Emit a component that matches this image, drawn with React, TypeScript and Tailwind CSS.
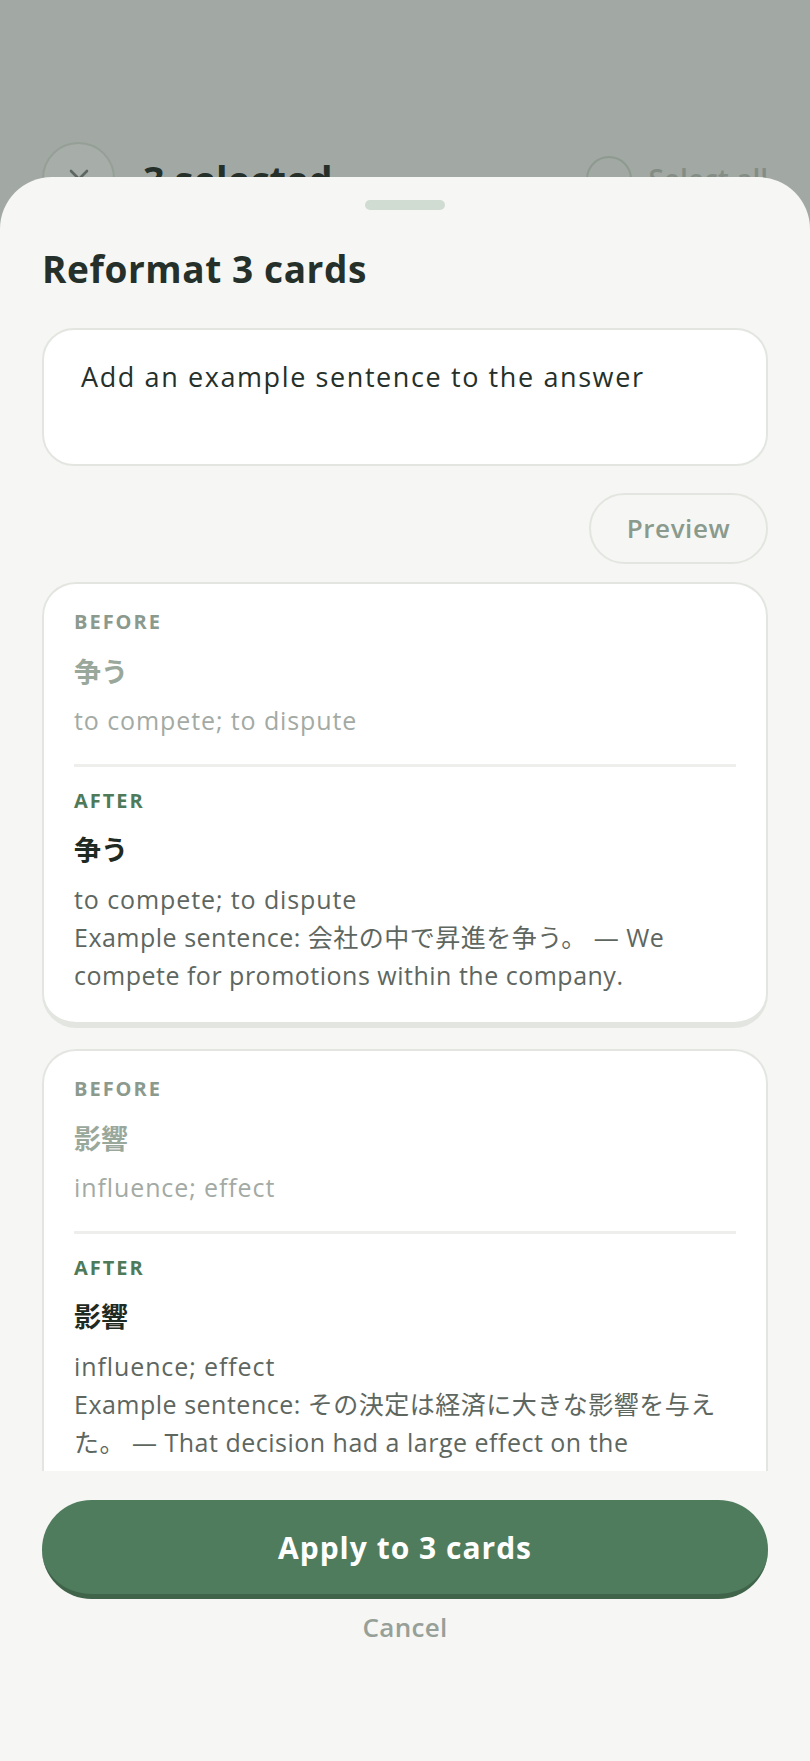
import React from "react";

type CardProps = { word: string; gloss: string; example: string };

function PreviewCard({ word, gloss, example }: CardProps) {
  return (
    <div className="rounded-[34px] border-2 border-b-[6px] border-[#e3e6e0] bg-white px-[30px] pt-[24px] pb-[28px]">
      <div className="text-[20px] leading-[28px] font-bold tracking-[2px] text-[#8b9a8d]">BEFORE</div>
      <div className="mt-[16px] text-[27px] leading-[40px] font-bold text-[#9aa89c]">{word}</div>
      <div className="mt-[9px] text-[25px] leading-[38px] tracking-[0.9px] text-[#a3aaa4]">{gloss}</div>
      <div className="mt-[25px] h-[3px] bg-[#eeefec]" />
      <div className="mt-[20px] text-[20px] leading-[28px] font-bold tracking-[2px] text-[#4f7a5a]">AFTER</div>
      <div className="mt-[15px] text-[27px] leading-[40px] font-bold text-[#1f2a22]">{word}</div>
      <div className="mt-[10px] text-[25px] leading-[38px] tracking-[0.5px] text-[#5e6660]">
        <div className="tracking-[0.9px]">{gloss}</div>
        <div>{example}</div>
      </div>
    </div>
  );
}

export default function App() {
  return (
    <div className="relative h-[1761px] w-[810px] overflow-hidden bg-[#a2a8a3] font-['Open_Sans','Noto_Sans_CJK_JP',sans-serif]">
      {/* dimmed page header underneath */}
      <div className="flex items-center justify-between px-[42px] pt-[142px]">
        <div className="flex items-center gap-[28px]">
          <div className="flex h-[73px] w-[73px] items-center justify-center rounded-full border-[2.5px] border-[#959f97] bg-[#a7ada8]">
            <svg width="22" height="22" viewBox="0 0 22 22" fill="none" stroke="#5d6660" strokeWidth="2.6" strokeLinecap="round">
              <path d="M3 3 L19 19 M19 3 L3 19" />
            </svg>
          </div>
          <div className="text-[38px] leading-[48px] font-bold text-[#25302a]">3 selected</div>
        </div>
        <div className="flex items-center gap-[16px]">
          <div className="h-[46px] w-[46px] rounded-full border-[2.5px] border-[#8e9a90]" />
          <div className="text-[28px] leading-[40px] font-semibold text-[#838d85]">Select all</div>
        </div>
      </div>

      {/* bottom sheet */}
      <div className="absolute inset-x-0 top-[177px] bottom-0 flex flex-col rounded-t-[52px] bg-[#f6f6f4]">
        <div className="flex justify-center pt-[23px]">
          <div className="h-[10px] w-[80px] rounded-full bg-[#d0dbd2]" />
        </div>
        <div className="px-[42px]">
          <h1 className="mt-[35px] text-[37px] leading-[48px] font-bold tracking-[0.6px] text-[#25302a]">Reformat 3 cards</h1>
          <div className="mt-[35px] h-[138px] rounded-[32px] border-2 border-[#e3e6e0] bg-white px-[37px] pt-[28px]">
            <div className="text-[27px] leading-[38px] tracking-[1.6px] text-[#25302a]">Add an example sentence to the answer</div>
          </div>
          <div className="mt-[27px] flex justify-end">
            <button className="flex h-[71px] w-[179px] items-center justify-center rounded-full border-2 border-[#e3e6e0] text-[26px] font-semibold tracking-[0.6px] text-[#8a9a8c]">
              Preview
            </button>
          </div>
        </div>
        <div className="mt-[18px] min-h-0 flex-1 overflow-hidden px-[42px]">
          <div className="flex flex-col gap-[21px]">
            <PreviewCard
              word="争う"
              gloss="to compete; to dispute"
              example="Example sentence: 会社の中で昇進を争う。 — We compete for promotions within the company."
            />
            <PreviewCard
              word="影響"
              gloss="influence; effect"
              example="Example sentence: その決定は経済に大きな影響を与えた。 — That decision had a large effect on the economy."
            />
          </div>
        </div>
        <div className="flex flex-col items-center px-[42px] pt-[29px] pb-[117px]">
          <button className="flex h-[99px] w-full items-center justify-center rounded-full border-b-[5px] border-[#3f6449] bg-[#507c5e] text-[30px] font-bold tracking-[1px] text-white">
            Apply to 3 cards
          </button>
          <div className="mt-[11px] text-[26px] leading-[34px] font-semibold tracking-[0.3px] text-[#97a098]">Cancel</div>
        </div>
      </div>
    </div>
  );
}
